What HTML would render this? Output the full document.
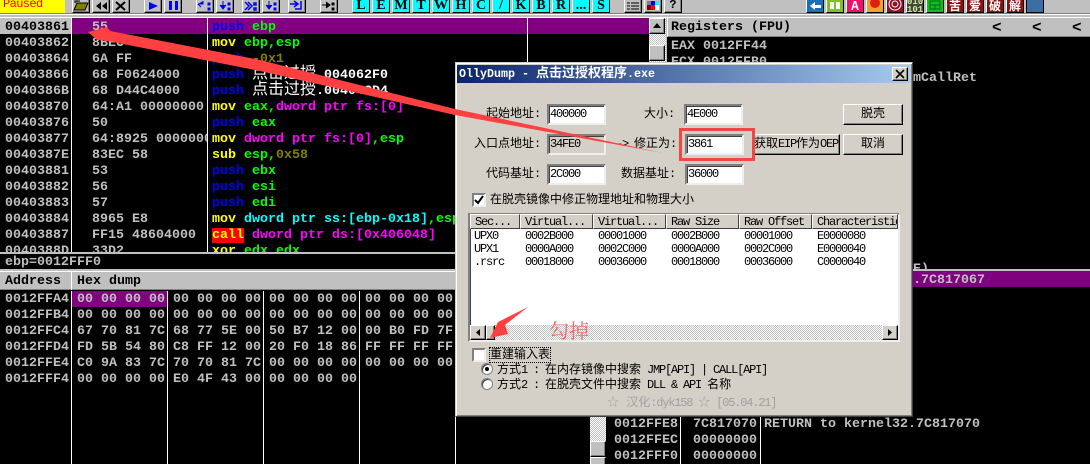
<!DOCTYPE html>
<html><head><meta charset="utf-8"><style>
html,body{margin:0;padding:0;background:#000}
#p{position:relative;width:1090px;height:464px;overflow:hidden;background:#000;font:bold 13.33px/16px "Liberation Mono","Noto Sans CJK SC",monospace;color:#c0c0c0}
#p div{position:absolute;box-sizing:border-box}
.t{white-space:pre;height:16px}
.g{color:#00ff00}.b{color:#0000f0}.y{color:#ffff00}.m{color:#ff00ff}.c{color:#00ffff}.o{color:#808000}.w{color:#fff}
.z{font-size:16px;font-weight:normal;line-height:0}
.v{width:1px;background:#fff}
.btn{background:#c0c0c0;border:1px solid;border-color:#fff #000 #000 #fff;box-shadow:inset -1px -1px #808080}
.cy{background:#00ffff;border:1px solid;border-color:#fff #000 #000 #fff;top:-3px;width:18px;height:16px;color:#000;font:bold 14px/15px "Liberation Serif",serif;text-align:center}
.ic{top:-3px;width:18px;height:16px;border:1px solid;border-color:#fff #000 #000 #fff;color:#fff;font:bold 12px/15px "Noto Sans CJK SC",sans-serif;text-align:center;overflow:hidden}
.s{font:12px/14px "Liberation Mono","Noto Sans CJK SC",monospace;color:#000;white-space:pre}
.l{letter-spacing:-1.2px}
.in{background:#fff;border:2px solid;border-color:#808080 #eee #eee #808080;box-shadow:inset 1px 1px #404040;font:12px/16px "Liberation Mono",monospace;color:#000;padding-left:1px;letter-spacing:-1.2px}
.bt{background:#d4d0c8;border:1px solid;border-color:#fff #000 #000 #fff;box-shadow:inset -1px -1px #808080;font:12px/19px "Liberation Mono","Noto Sans CJK SC",monospace;color:#000;text-align:center;white-space:pre}
.h{top:214px;height:15px;background:#d4d0c8;border:1px solid;border-color:#fff #404040 #404040 #fff;font:12px/15px "Liberation Mono",monospace;color:#000;letter-spacing:-1.2px;padding-left:4px;white-space:pre;overflow:hidden}
.ck{background-color:#fff;background-image:linear-gradient(45deg,#c0c0c0 25%,transparent 25%,transparent 75%,#c0c0c0 75%),linear-gradient(45deg,#c0c0c0 25%,transparent 25%,transparent 75%,#c0c0c0 75%);background-size:2px 2px;background-position:0 0,1px 1px}
.box{width:14px;height:14px;background:#fff;border:2px solid;border-color:#808080 #eee #eee #808080}
.r{width:12px;height:12px;border-radius:50%;background:#fff;border:1px solid #808080;box-shadow:inset 1px 1px #404040}
</style></head><body><div id="p">

<div style="left:0;top:0;width:1090px;height:18px;background:#c0c0c0"></div>
<div style="left:0;top:13px;width:1090px;height:1px;background:#808080"></div>
<div style="left:0;top:14px;width:1090px;height:1px;background:#fff"></div>
<div style="left:0;top:17px;width:1090px;height:1px;background:#fff"></div>
<div style="left:0;top:0;width:65px;height:13px;background:#ffff00;color:#ff0000;font:12px/9px 'Liberation Mono',monospace;letter-spacing:-.6px;padding-left:3px;overflow:hidden">Paused</div>

<div class="btn" style="left:72px;top:-3px;width:18px;height:16px;background:#c0c0c0"><svg width="16" height="14" style="display:block"><path d="M1 12 L4 5 H15 L12 12Z M2 5V3H7" fill="#808000" stroke="#000"/></svg></div>
<div class="btn" style="left:92px;top:-3px;width:18px;height:16px"><svg width="16" height="14" style="display:block"><path d="M8 4V12L3 8Z M14 4V12L9 8Z" fill="#000"/></svg></div>
<div class="btn" style="left:112px;top:-3px;width:18px;height:16px"><svg width="16" height="14" style="display:block"><path d="M3 4L12 12M12 4L3 12" stroke="#000" stroke-width="2"/></svg></div>
<div class="btn" style="left:144px;top:-3px;width:18px;height:16px"><svg width="16" height="14" style="display:block"><path d="M4 4V12L13 8Z" fill="#0000f0"/></svg></div>
<div class="btn" style="left:164px;top:-3px;width:18px;height:16px"><svg width="16" height="14" style="display:block"><path d="M4 3H7V12H4Z M10 3H13V12H10Z" fill="#0000f0"/></svg></div>
<div class="btn" style="left:196px;top:-3px;width:18px;height:16px"><svg width="16" height="14" style="display:block"><path d="M1 6H6V3M1 6L4 9M11 5h2v2h-2zM11 10h2v2h-2z" fill="#0000f0" stroke="#0000f0"/></svg></div>
<div class="btn" style="left:216px;top:-3px;width:18px;height:16px"><svg width="16" height="14" style="display:block"><path d="M6 3V10M3 7L6 11L9 7M11 5h2v2h-2zM11 10h2v2h-2z" fill="#0000f0" stroke="#0000f0"/></svg></div>
<div class="btn" style="left:242px;top:-3px;width:18px;height:16px"><svg width="16" height="14" style="display:block"><path d="M2 4L6 8L2 12M5 4L9 8L5 12M11 5h2v2h-2zM11 10h2v2h-2z" fill="none" stroke="#0000f0" stroke-width="1.5"/></svg></div>
<div class="btn" style="left:262px;top:-3px;width:18px;height:16px"><svg width="16" height="14" style="display:block"><path d="M6 3V10M3 7L6 11L9 7M11 5h2v2h-2zM11 10h2v2h-2z" fill="#0000f0" stroke="#0000f0"/></svg></div>
<div class="btn" style="left:288px;top:-3px;width:18px;height:16px"><svg width="16" height="14" style="display:block"><path d="M1 6H8M5 3L9 6L5 9M12 3V11H6" fill="none" stroke="#0000f0" stroke-width="1.5"/></svg></div>
<div class="btn" style="left:320px;top:-3px;width:18px;height:16px"><svg width="16" height="14" style="display:block"><path d="M1 7H7M5 4L9 7L5 10M11 5h2v2h-2zM11 10h2v2h-2z" fill="#000" stroke="#000"/></svg></div>

<div class="cy" style="left:352px">L</div><div class="cy" style="left:372px">E</div><div class="cy" style="left:392px">M</div><div class="cy" style="left:412px">T</div><div class="cy" style="left:432px">W</div><div class="cy" style="left:452px">H</div><div class="cy" style="left:472px">C</div><div class="cy" style="left:492px">/</div><div class="cy" style="left:512px">K</div><div class="cy" style="left:532px">B</div><div class="cy" style="left:552px">R</div><div class="cy" style="left:572px">...</div><div class="cy" style="left:592px">S</div>

<div class="btn" style="left:624px;top:-3px;width:18px;height:16px"><svg width="16" height="14" style="display:block"><path d="M2 5h3M2 8h3M2 11h3M6 5h8M6 8h8M6 11h8" stroke="#000"/></svg></div>
<div class="btn" style="left:644px;top:-3px;width:18px;height:16px"><svg width="16" height="14" style="display:block"><rect x="2" y="3" width="4" height="4" fill="#808080"/><rect x="6" y="3" width="4" height="4" fill="#0000f0"/><rect x="10" y="3" width="4" height="4" fill="#00ffff"/><rect x="2" y="7" width="4" height="5" fill="#800000"/><rect x="6" y="7" width="4" height="5" fill="#f00"/><rect x="10" y="7" width="4" height="5" fill="#fff"/></svg></div>
<div class="btn" style="left:664px;top:-3px;width:18px;height:16px;color:#000;font:bold 12px/15px 'Liberation Mono',monospace;text-align:center">?</div>

<div class="ic" style="left:806px;background:#1a70b8"><svg width="16" height="14" style="display:block"><path d="M3 8L8 4V7H14V10H8V12Z" fill="#fff"/></svg></div>
<div class="ic" style="left:826px;background:#80c020"><svg width="16" height="14" style="display:block"><path d="M3 4H7V11H3ZM9 4H13V11H9Z" fill="#fff"/></svg></div>
<div class="ic" style="left:846px;background:#f0106a">A</div>
<div class="ic" style="left:866px;background:#f0a030"><svg width="16" height="14" style="display:block"><circle cx="8" cy="5" r="5" fill="#e02010"/></svg></div>
<div class="ic" style="left:886px;background:#901028"><svg width="16" height="14" style="display:block"><circle cx="8" cy="6" r="6" fill="none" stroke="#fff"/><circle cx="8" cy="6" r="3" fill="none" stroke="#fff"/></svg></div>
<div class="ic" style="left:906px;background:#404838;color:#d0e0a0;font:bold 9px/8px 'Liberation Mono',monospace">010<br>101</div>
<div class="ic" style="left:926px;background:#10c010"><svg width="16" height="14" style="display:block"><path d="M3 3H13V11H3ZM3 7H13M8 7V11" fill="none" stroke="#063"/></svg></div>
<div class="ic" style="left:946px;background:#8b1010">苦</div>
<div class="ic" style="left:966px;background:#8b1010">爱</div>
<div class="ic" style="left:986px;background:#8b1010">破</div>
<div class="ic" style="left:1006px;background:#8b1010">解</div>
<div style="left:1026px;top:-3px;width:18px;height:16px;background:#3c6ea5;border:1px solid #000;border-top:0"></div>

<!-- disasm -->
<div style="left:0;top:18px;width:72px;height:16px;background:#c0c0c0"></div>
<div style="left:72px;top:18px;width:577px;height:16px;background:#800080"></div>
<div class="v" style="left:71px;top:18px;height:234px"></div>
<div class="v" style="left:207px;top:18px;height:234px"></div>
<div class="v" style="left:527px;top:18px;height:234px"></div>

<div style="left:5px;top:18px;padding-top:2px;width:66px;height:234px;overflow:hidden;white-space:pre"><span style="color:#000">00403861</span>
00403862
00403864
00403866
0040386B
00403870
00403876
00403877
0040387E
00403881
00403882
00403883
00403884
00403887
0040388D</div>
<div style="left:92px;top:18px;padding-top:2px;width:115px;height:234px;overflow:hidden;white-space:pre">55
8BEC
6A FF
68 F0624000
68 D44C4000
64:A1 00000000
50
64:8925 00000000
83EC 58
53
56
57
8965 E8
FF15 48604000
33D2</div>
<div style="left:212px;top:18px;padding-top:2px;width:437px;height:234px;overflow:hidden;white-space:pre"><span class="b">push</span> <span class="g">ebp</span>
<span class="y">mov</span> <span class="g">ebp,esp</span>
<span class="b">push</span> <span class="o">-0x1</span>
<span class="b">push</span> <span class="w"><span class="z">点击过授</span>.004062F0</span>
<span class="b">push</span> <span class="w"><span class="z">点击过授</span>.00404CD4</span>
<span class="y">mov</span> <span class="g">eax,</span><span class="m">dword ptr fs:[0]</span>
<span class="b">push</span> <span class="g">eax</span>
<span class="y">mov</span> <span class="m">dword ptr fs:[0]</span><span class="g">,esp</span>
<span class="y">sub</span> <span class="g">esp,</span><span class="o">0x58</span>
<span class="b">push</span> <span class="g">ebx</span>
<span class="b">push</span> <span class="g">esi</span>
<span class="b">push</span> <span class="g">edi</span>
<span class="y">mov</span> <span class="c">dword ptr ss:[ebp-0x18]</span><span class="g">,esp</span>
<span class="y" style="background:#f00">call</span> <span class="m">dword ptr ds:[0x406048]</span>
<span class="y">xor</span> <span class="g">edx,edx</span></div>

<div class="ck" style="left:649px;top:18px;width:17px;height:234px"></div>
<div class="btn" style="left:649px;top:18px;width:16px;height:16px"><svg width="14" height="14" style="display:block"><path d="M7 4L11 9H3Z" fill="#000"/></svg></div>
<div class="btn" style="left:649px;top:45px;width:16px;height:16px"></div>

<!-- registers -->
<div style="left:666px;top:18px;width:1px;height:250px;background:#c0c0c0"></div>
<div style="left:667px;top:18px;width:423px;height:19px;background:#c0c0c0;border-left:1px solid #fff;border-bottom:1px solid #808080;color:#000;line-height:19px;padding-left:3px;white-space:pre">Registers (FPU)</div>
<div style="left:992px;top:21px;color:#000;white-space:pre;font-size:16px;line-height:14px">&lt;</div>
<div style="left:1032px;top:21px;color:#000;white-space:pre;font-size:16px;line-height:14px">&lt;</div>
<div style="left:1072px;top:21px;color:#000;white-space:pre;font-size:16px;line-height:14px">&lt;</div>
<div class="t" style="left:671px;top:39px">EAX 0012FF44</div>
<div class="t" style="left:671px;top:55px">ECX 0012FFB0</div>
<div class="t" style="left:913px;top:71px">mCallRet</div>
<div class="t" style="left:913px;top:262px;height:7px;overflow:hidden">E)</div>

<!-- info pane + splitter -->
<div style="left:0;top:252px;width:649px;height:2px;background:#c0c0c0"></div>
<div class="t" style="left:5px;top:255px">ebp=0012FFF0</div>
<div style="left:0;top:269px;width:1090px;height:2px;background:#c0c0c0"></div>

<!-- dump -->
<div style="left:0;top:271px;width:455px;height:19px;background:#c0c0c0;border-top:1px solid #fff;border-bottom:1px solid #808080;color:#000;line-height:19px;padding-left:5px;white-space:pre">Address</div>
<div style="left:71px;top:271px;height:19px;width:1px;background:#fff"></div>
<div class="t" style="left:77px;top:274px;color:#000">Hex dump</div>
<div style="left:72px;top:291px;width:95px;height:16px;background:#800080"></div>
<div class="v" style="left:71px;top:291px;height:173px"></div>
<div class="v" style="left:167px;top:291px;height:173px"></div>
<div class="v" style="left:263px;top:291px;height:173px"></div>
<div class="v" style="left:359px;top:291px;height:173px"></div>
<div class="v" style="left:455px;top:291px;height:173px"></div>
<div style="left:5px;top:292px;white-space:pre">0012FFA4
0012FFB4
0012FFC4
0012FFD4
0012FFE4
0012FFF4</div>
<div style="left:77px;top:292px;white-space:pre">00 00 00 00
00 00 00 00
67 70 81 7C
FD 5B 54 80
C0 9A 83 7C
00 00 00 00</div>
<div style="left:173px;top:292px;white-space:pre">00 00 00 00
00 00 00 00
68 77 5E 00
C8 FF 12 00
70 70 81 7C
E0 4F 43 00</div>
<div style="left:269px;top:292px;white-space:pre">00 00 00 00
00 00 00 00
50 B7 12 00
20 F0 18 86
00 00 00 00
00 00 00 00</div>
<div style="left:365px;top:292px;white-space:pre">00 00 00 00
00 00 00 00
00 B0 FD 7F
FF FF FF FF
00 00 00 00</div>

<!-- stack -->
<div class="ck" style="left:590px;top:416px;width:16px;height:48px"></div>
<div class="btn" style="left:590px;top:441px;width:16px;height:16px"></div>
<div class="btn" style="left:590px;top:457px;width:16px;height:16px"></div>
<div class="v" style="left:680px;top:416px;height:48px"></div>
<div class="v" style="left:760px;top:416px;height:48px"></div>
<div style="left:614px;top:417px;white-space:pre">0012FFE8
0012FFEC
0012FFF0</div>
<div style="left:693px;top:417px;white-space:pre">7C817070
00000000
00000000</div>
<div class="t" style="left:764px;top:417px">RETURN to kernel32.7C817070</div>
<div style="left:913px;top:271px;width:177px;height:16px;background:#800080"></div>
<div class="t" style="left:913px;top:273px">.7C817067</div>

<!-- dialog -->
<div style="left:455px;top:62px;width:458px;height:355px;background:#d4d0c8;border:1px solid;border-color:#d4d0c8 #404040 #404040 #d4d0c8;box-shadow:inset 1px 1px #fff,inset -1px -1px #808080"></div>
<div style="left:457px;top:65px;width:453px;height:18px;background:linear-gradient(90deg,#0a246a,#a6caf0);color:#fff;font:bold 11.67px/18px 'Liberation Mono','Noto Sans CJK SC',monospace;padding-left:2px;white-space:pre">OllyDump - <span style="font-size:13px;line-height:0">点击过授权程序</span>.exe</div>
<div class="bt" style="left:892px;top:67px;width:16px;height:14px"><svg width="14" height="12" style="display:block"><path d="M3 2L11 10M11 2L3 10" stroke="#000" stroke-width="1.6"/></svg></div>

<div class="s" style="left:486px;top:107px">起始地址:</div>
<div class="in" style="left:547px;top:104px;width:59px;height:21px">400000</div>
<div class="s" style="left:644px;top:107px">大小:</div>
<div class="in" style="left:684px;top:104px;width:59px;height:21px">4E000</div>
<div class="bt" style="left:843px;top:104px;width:60px;height:21px">脱壳</div>

<div class="s" style="left:474px;top:137px">入口点地址:</div>
<div class="in" style="left:547px;top:134px;width:59px;height:21px;background:#d4d0c8">34FE0</div>
<div class="s" style="left:616px;top:137px"><span class="l">-&gt; </span>修正为:</div>
<div class="in" style="left:685px;top:134px;width:59px;height:21px">3861</div>
<div class="bt" style="left:752px;top:134px;width:88px;height:21px">获取<span class="l">EIP</span>作为<span class="l">OEP</span></div>
<div class="bt" style="left:843px;top:134px;width:60px;height:21px">取消</div>
<div style="left:679px;top:128px;width:76px;height:33px;border:3px solid #f44545"></div>

<div class="s" style="left:486px;top:167px">代码基址:</div>
<div class="in" style="left:547px;top:164px;width:59px;height:21px">2C000</div>
<div class="s" style="left:621px;top:167px">数据基址:</div>
<div class="in" style="left:685px;top:164px;width:59px;height:21px">36000</div>

<div class="box" style="left:472px;top:193px"><svg width="10" height="10" style="display:block"><path d="M1 5L4 8L9 1" fill="none" stroke="#000" stroke-width="2"/></svg></div>
<div class="s" style="left:490px;top:193px">在脱壳镜像中修正物理地址和物理大小</div>

<div style="left:468px;top:213px;width:432px;height:129px;background:#fff;border:2px solid;border-color:#808080 #eee #eee #808080;box-shadow:inset 1px 1px #404040"></div>
<div class="h" style="left:470px;width:50px">Sec...</div>
<div class="h" style="left:520px;width:73px">Virtual...</div>
<div class="h" style="left:593px;width:73px">Virtual...</div>
<div class="h" style="left:666px;width:73px">Raw Size</div>
<div class="h" style="left:739px;width:73px">Raw Offset</div>
<div class="h" style="left:812px;width:86px">Characteristics</div>
<div class="s l" style="left:474px;top:230px;line-height:13px">UPX0
UPX1
.rsrc</div>
<div class="s l" style="left:525px;top:230px;line-height:13px">0002B000
0000A000
00018000</div>
<div class="s l" style="left:598px;top:230px;line-height:13px">00001000
0002C000
00036000</div>
<div class="s l" style="left:671px;top:230px;line-height:13px">0002B000
0000A000
00018000</div>
<div class="s l" style="left:744px;top:230px;line-height:13px">00001000
0002C000
00036000</div>
<div class="s l" style="left:817px;top:230px;line-height:13px">E0000080
E0000040
C0000040</div>
<div class="ck" style="left:470px;top:325px;width:428px;height:15px"></div>
<div class="bt" style="left:470px;top:325px;width:16px;height:15px"><svg width="14" height="13" style="display:block"><path d="M9 3V10L5 6.5Z" fill="#000"/></svg></div>
<div class="bt" style="left:486px;top:325px;width:9px;height:15px"></div>
<div class="bt" style="left:882px;top:325px;width:16px;height:15px"><svg width="14" height="13" style="display:block"><path d="M5 3V10L9 6.5Z" fill="#000"/></svg></div>

<div class="box" style="left:472px;top:348px"></div>
<div class="s" style="left:490px;top:348px;outline:1px dotted #000;height:14px">重建输入表</div>
<div class="r" style="left:481px;top:363px"><div style="left:3px;top:3px;width:4px;height:4px;border-radius:50%;background:#000"></div></div>
<div class="s" style="left:497px;top:363px">方式<span class="l">1 : </span>在内存镜像中搜索<span class="l"> JMP[API] | CALL[API]</span></div>
<div class="r" style="left:481px;top:378px"></div>
<div class="s" style="left:497px;top:378px">方式<span class="l">2 : </span>在脱壳文件中搜索<span class="l"> DLL &amp; API </span>名称</div>
<div class="s" style="left:607px;top:396px;color:#a0a0a0">☆ 汉化<span class="l">:dyk158 </span>☆<span class="l"> [05.04.21]</span></div>

<!-- annotations -->
<svg width="1090" height="464" style="position:absolute;left:0;top:0">
<polygon points="88,32 107,27 110,31 260,60 455,109 663,153 455,115 260,71 108,41 97,40" fill="#ff4040"/>
<polygon points="528,307 498,322 490,338 508,334 505,325" fill="#ff4040"/>
<text x="549" y="338" fill="#ff6060" font-size="20" font-weight="normal" font-family="'Noto Serif CJK SC',serif">勾掉</text>
</svg>
</div></body></html>
